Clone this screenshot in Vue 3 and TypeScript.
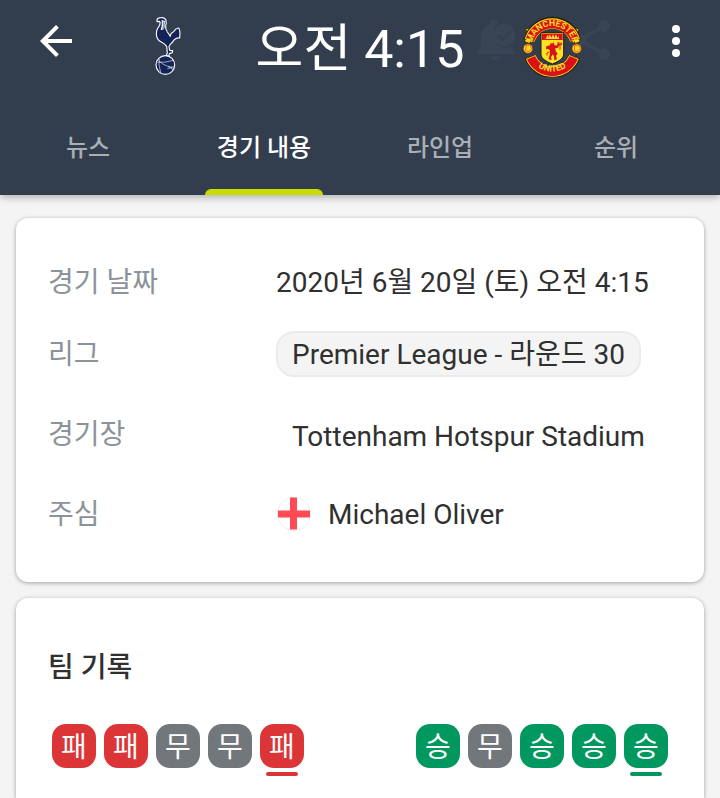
<script setup lang="ts">
import { ref } from 'vue'

type Result = 'win' | 'draw' | 'loss'

const tabs: string[] = ['뉴스', '경기 내용', '라인업', '순위']
const active = ref<number>(1)

const letters: Record<Result, string> = { win: '승', draw: '무', loss: '패' }
const form: Result[][] = [
  ['loss', 'loss', 'draw', 'draw', 'loss'],
  ['win', 'draw', 'win', 'win', 'win'],
]
</script>

<template>
  <div class="page">
    <header class="header">
      <div class="bar">
        <button class="icon-button back" type="button" aria-label="뒤로">
          <svg width="48" height="48" viewBox="0 0 24 24">
            <path fill="#fff" d="M20 11H7.83l5.59-5.59L12 4l-8 8 8 8 1.41-1.41L7.83 13H20v-2z" />
          </svg>
        </button>

        <div class="crest">
          <svg width="27" height="60" viewBox="45 33 81 180">
            <g fill="#132257" stroke="#f4f6fa" stroke-width="3.5" stroke-linejoin="round">
              <path d="M51 45 Q53 38 62 38 Q74 36 78 46 Q80 53 77 62 Q76 72 82 81 Q87 88 91 94 Q91 84 101 80 Q106 70 116 69 Q120 75 120 84 L119 99 Q109 98 103 104 Q98 112 90 119 L87 125 L89 136 L98 137 L97 143 L88 146 L87 152 L78 153 L82 144 L80 124 Q74 116 64 111 Q52 105 50 94 Q47 77 55 67 Q63 57 59 49 L51 50 Z" />
              <circle cx="76" cy="180" r="28" />
            </g>
            <path fill="#f4f6fa" d="M65 45 L76 48 Q74 58 74 66 Q72 77 62 75 Q67 62 65 45 Z" />
            <path fill="none" stroke="#132257" stroke-width="2" d="M71 49 Q73 60 68 74" />
            <g fill="none" stroke="#e4e8f2" stroke-width="2">
              <path d="M52 172 Q72 174 101 166 M58 162 Q54 178 62 202 M56 167 Q78 188 103 186 M84 184 L102 195 M82 191 L97 187" />
            </g>
          </svg>
        </div>

        <h1 class="kickoff">오전 4:15</h1>

        <div class="crest">
          <div class="ghost">
            <svg width="48" height="48" viewBox="0 0 144 144">
              <path fill="#394554" d="M70 11 q7 0 9 7 l0 4 a42 42 0 0 0 10 72 q18 1 28 -1 v4 l15 14 v4 H12 v-6 l14 -15 V62 Q26 32 55 23 V20 Q57 11 64 11 Z M55 121 h30 q-3 12 -15 12 t-15 -12 Z" />
              <circle cx="96" cy="57" r="34" fill="#394554" />
              <path d="M78 57 l13 13 l25 -25" fill="none" stroke="#323e4d" stroke-width="7" />
            </svg>
            <svg width="48" height="48" viewBox="0 0 24 24">
              <path fill="#394554" d="M18 16.08c-.76 0-1.44.3-1.96.77L8.91 12.7c.05-.23.09-.46.09-.7s-.04-.47-.09-.7l7.05-4.11c.54.5 1.25.81 2.04.81 1.66 0 3-1.34 3-3s-1.34-3-3-3-3 1.34-3 3c0 .24.04.47.09.7L8.04 9.81C7.5 9.31 6.79 9 6 9c-1.66 0-3 1.34-3 3s1.34 3 3 3c.79 0 1.5-.31 2.04-.81l7.12 4.16c-.05.21-.08.43-.08.65 0 1.61 1.31 2.92 2.92 2.92s2.92-1.31 2.92-2.92-1.31-2.92-2.92-2.92z" />
            </svg>
          </div>
          <svg class="front" width="61" height="61" viewBox="35 33 183 183">
            <defs>
              <path id="arc-top" d="M64 125 A62 62 0 0 1 188 125" />
              <path id="arc-bottom" d="M51 125 A75 75 0 0 0 201 125" />
            </defs>
            <!-- scrollwork around the ribbons -->
            <g fill="#f5d90f" stroke="#2a2412" stroke-width="2.5">
              <circle cx="126" cy="41" r="6" /><circle cx="111" cy="43" r="5" /><circle cx="141" cy="43" r="5" />
              <circle cx="98" cy="47" r="4" /><circle cx="154" cy="47" r="4" />
              <path d="M46 72 L60 68 L66 80 L52 92 Z M206 72 L192 68 L186 80 L200 92 Z" />
              <path d="M42 104 L58 92 L60 116 L46 112 Z M210 104 L194 92 L192 116 L206 112 Z" />
              <circle cx="126" cy="208" r="6" /><circle cx="112" cy="206" r="5" /><circle cx="140" cy="206" r="5" />
              <circle cx="53" cy="162" r="6" /><circle cx="199" cy="162" r="6" />
            </g>
            <!-- ribbons -->
            <g fill="none">
              <path stroke="#2a1a10" stroke-width="35" d="M57 107 A71 71 0 0 1 195 107" />
              <path stroke="#f5d90f" stroke-width="31" d="M58 106 A71 71 0 0 1 194 106" />
              <path stroke="#dc0f18" stroke-width="26" d="M59 104 A71 71 0 0 1 193 104" />
              <path stroke="#2a1a10" stroke-width="35" d="M60 155 A70 70 0 0 0 192 155" />
              <path stroke="#f5d90f" stroke-width="31" d="M61 156 A70 70 0 0 0 191 156" />
              <path stroke="#dc0f18" stroke-width="26" d="M62 158 A70 70 0 0 0 190 158" />
            </g>
            <g class="crest-text" fill="#fbe122">
              <text><textPath href="#arc-top" startOffset="50%" text-anchor="middle">MANCHESTER</textPath></text>
              <text><textPath href="#arc-bottom" startOffset="50%" text-anchor="middle">UNITED</textPath></text>
            </g>
            <!-- footballs -->
            <g fill="#fbd920" stroke="#b01a12" stroke-width="2">
              <circle cx="53" cy="131" r="14" /><circle cx="199" cy="131" r="14" />
            </g>
            <path fill="none" stroke="#e07a18" stroke-width="3" d="M47 122 L58 120 L64 130 L57 140 L46 138 Z M193 122 L204 120 L210 130 L203 140 L192 138 Z" />
            <!-- shield -->
            <path fill="#fbe122" stroke="#241c18" stroke-width="3" d="M92 83 H160 V150 Q158 165 126 177 Q94 165 92 150 Z" />
            <path fill="#dc0f18" d="M95 86 H157 V107 H95 Z" />
            <path fill="#fbe122" d="M106 102 L110 93 L114 89 V99 L119 88 L123 98 L128 87 L132 98 L137 88 L141 98 L145 93 L146 102 Z M95 105 H157 V109 H95 Z" />
            <path fill="#d8101a" d="M121 113 L125 116 L130 112 L132 120 L138 122 L143 116 L140 112 L144 112 L148 118 L143 128 L135 130 L136 139 L142 146 L137 152 L140 163 L132 166 L131 154 L127 148 L122 157 L124 165 L115 163 L118 150 L119 136 L112 131 L107 133 L108 124 L119 121 Z" />
            <path fill="none" stroke="#d8101a" stroke-width="3" d="M149 112 V134 M144 113 V119 H154 V113 M117 140 Q106 144 110 151" />
          </svg>
        </div>

        <button class="icon-button more" type="button" aria-label="더보기">
          <svg width="48" height="48" viewBox="0 0 48 48">
            <g fill="#fff">
              <circle cx="24" cy="12" r="4" /><circle cx="24" cy="24" r="4" /><circle cx="24" cy="36" r="4" />
            </g>
          </svg>
        </button>
      </div>

      <nav class="tabs">
        <button
          v-for="(tab, i) in tabs"
          :key="tab"
          class="tab"
          :class="{ active: i === active }"
          type="button"
          @click="active = i"
        >
          <span class="tab-label">{{ tab }}</span>
          <span class="indicator"></span>
        </button>
      </nav>
    </header>

    <main class="content">
      <section class="card">
        <dl class="facts">
          <div class="fact first">
            <dt>경기 날짜</dt>
            <dd><span class="value">2020년 6월 20일 (토) 오전 4:15</span></dd>
          </div>
          <div class="fact">
            <dt>리그</dt>
            <dd><a class="chip" href="#league">Premier League - 라운드 30</a></dd>
          </div>
          <div class="fact">
            <dt>경기장</dt>
            <dd class="inset">Tottenham Hotspur Stadium</dd>
          </div>
          <div class="fact">
            <dt>주심</dt>
            <dd class="referee">
              <svg width="36" height="36" viewBox="0 0 36 36">
                <circle cx="18" cy="18" r="16.5" fill="#fff" stroke="#ececec" />
                <path fill="#ff4b55" d="M14 1.5 H21 V14.5 H34 V21.5 H21 V33.5 H14 V21.5 H2 V14.5 H14 Z" />
              </svg>
              <span class="value">Michael Oliver</span>
            </dd>
          </div>
        </dl>
      </section>

      <section class="card records">
        <h2 class="heading">팀 기록</h2>
        <div class="form">
          <ol v-for="(team, t) in form" :key="t" class="team">
            <li v-for="(r, i) in team" :key="i" class="result" :class="r">
              <span class="tile">{{ letters[r] }}</span>
              <span v-if="i === team.length - 1" class="latest"></span>
            </li>
          </ol>
        </div>
      </section>
    </main>
  </div>
</template>

<style>
body {
  margin: 0;
  background: #f4f4f4;
}
</style>

<style scoped>
.page {
  display: flex;
  flex-direction: column;
  min-height: 100vh;
  box-sizing: border-box;
  color: #303030;
  font-family: Roboto, 'Noto Sans CJK KR', sans-serif;
  font-size: 28px;
  line-height: 40px;
}

svg {
  display: block;
  flex: none;
}

button {
  padding: 0;
  border: 0;
  background: none;
  font: inherit;
  cursor: pointer;
}

.header {
  background: #323e4d;
  box-shadow: 0 2px 8px rgba(0, 0, 0, 0.3);
}

.bar {
  display: grid;
  grid-template-columns: 112px 112px 1fr 112px 112px;
  align-items: center;
  height: 92px;
}

.icon-button {
  display: flex;
  align-items: center;
  justify-content: center;
  width: 56px;
  height: 56px;
  margin-bottom: 10px;
}

.back {
  justify-self: center;
}

.more {
  justify-self: end;
  margin-right: 16px;
}

.crest {
  position: relative;
  display: flex;
  justify-content: center;
}

.ghost {
  position: absolute;
  top: 0;
  left: -24px;
  right: -8px;
  display: flex;
  justify-content: space-between;
}

.front {
  position: relative;
}

.crest-text {
  font-size: 26px;
  font-weight: 700;
}

.kickoff {
  margin: 0;
  padding-top: 8px;
  color: #fff;
  font-size: 52px;
  font-weight: 400;
  line-height: 60px;
  text-align: center;
  white-space: nowrap;
}

.tabs {
  display: grid;
  grid-template-columns: repeat(4, 1fr);
  height: 103px;
  padding-right: 16px;
}

.tab {
  display: grid;
  grid-template-rows: 1fr 6px;
  justify-content: center;
  color: #a9afb6;
  font-size: 24px;
  font-weight: 500;
}

.tab-label {
  padding: 36px 12px 0;
  line-height: 40px;
}

.indicator {
  border-radius: 6px 6px 0 0;
}

.tab.active {
  color: #fff;
}

.tab.active .indicator {
  background: #c8dc00;
}

.content {
  display: flex;
  flex: 1;
  flex-direction: column;
  gap: 16px;
  padding: 23px 16px 0;
}

.card {
  padding: 32px;
  border-radius: 12px;
  background: #fff;
  box-shadow: 0 1px 4px rgba(0, 0, 0, 0.35);
}

.facts {
  margin: 0;
}

.fact {
  display: grid;
  grid-template-columns: 228px 1fr;
  align-items: center;
  height: 80px;
}

.fact.first {
  height: 64px;
}

.card:first-child {
  padding-bottom: 28px;
}

dt,
.value {
  padding-top: 2px;
}

dt {
  color: #8b9299;
}

dd {
  display: flex;
  align-items: center;
  margin: 0;
  white-space: nowrap;
}

.chip {
  padding: 2px 14px 0;
  border: 2px solid #ebebeb;
  border-radius: 18px;
  background: #f4f4f4;
  color: inherit;
  text-decoration: none;
}

.inset {
  padding: 6px 0 0 16px;
}

.referee {
  gap: 16px;
}

.records {
  flex: 1;
  padding: 50px 36px 0 32px;
  border-radius: 12px 12px 0 0;
}

.heading {
  margin: 0 0 36px;
  font-size: 28px;
  font-weight: 500;
  line-height: 40px;
}

.form {
  display: flex;
  justify-content: space-between;
  padding-left: 4px;
}

.team {
  display: flex;
  gap: 8px;
  margin: 0;
  padding: 0;
  list-style: none;
}

.result {
  display: flex;
  flex-direction: column;
  align-items: center;
  gap: 4px;
}

.tile {
  box-sizing: border-box;
  width: 44px;
  height: 44px;
  padding-top: 2px;
  border-radius: 14px;
  color: #fff;
  line-height: 44px;
  text-align: center;
}

.latest {
  width: 32px;
  height: 4px;
  border-radius: 2px;
}

.win > span {
  background: #00985f;
}

.draw > span {
  background: #71777b;
}

.loss > span {
  background: #dc3537;
}
</style>
